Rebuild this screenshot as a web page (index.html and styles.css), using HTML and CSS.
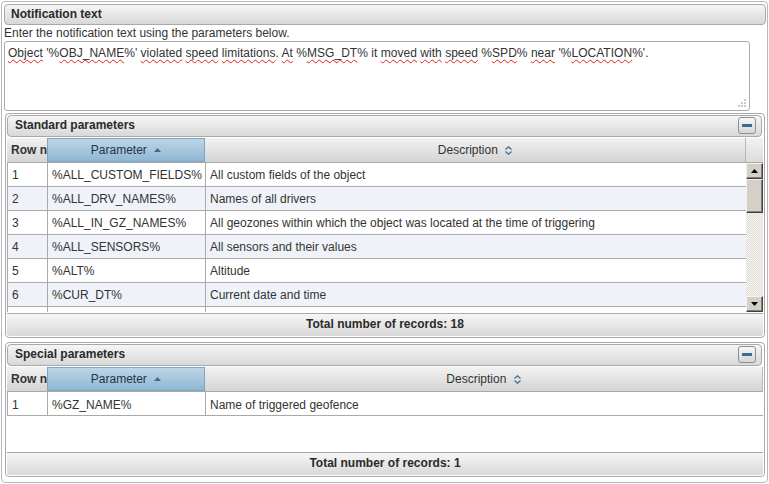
FILE: index.html
```html
<!DOCTYPE html>
<html lang="en">
<head>
  <meta charset="UTF-8">
  <title>Notification text</title>
  <link rel="stylesheet" href="styles.css">
</head>
<body>
  <div class="frame">
    <div class="bar title">Notification text</div>
    <div class="hint">Enter the notification text using the parameters below.</div>
    <div class="editor">
      <span class="sp">Object</span> '%<span class="sp">OBJ_NAME</span>%' <span class="sp">violated</span> <span class="sp">speed</span> <span class="sp">limitations</span>. <span class="sp">At</span> %<span class="sp">MSG_DT</span>% it <span class="sp">moved</span> <span class="sp">with</span> <span class="sp">speed</span> %<span class="sp">SPD</span>% <span class="sp">near</span> '%<span class="sp">LOCATION</span>%'.
      <svg class="grip" width="9" height="9" viewBox="0 0 9 9">
        <rect x="6" y="0" width="2" height="2" fill="#c8c8c8"/>
        <rect x="3" y="3" width="2" height="2" fill="#c8c8c8"/>
        <rect x="6" y="3" width="2" height="2" fill="#c8c8c8"/>
        <rect x="0" y="6" width="2" height="2" fill="#c8c8c8"/>
        <rect x="3" y="6" width="2" height="2" fill="#c8c8c8"/>
        <rect x="6" y="6" width="2" height="2" fill="#c8c8c8"/>
      </svg>
    </div>

    <!-- standard parameters -->
    <div class="panel">
      <div class="bar panel-head">
        Standard parameters
        <span class="toggle"><span class="minus"></span></span>
      </div>
      <div class="grid-head with-scroll">
        <div class="th th-num">Row number</div>
        <div class="th th-sel">Parameter <svg class="sort" width="7" height="4" viewBox="0 0 7 4"><path d="M0 4 L3.5 0 L7 4 Z" fill="#3e6c8c"/></svg></div>
        <div class="th">Description <svg class="sort2" width="7" height="9" viewBox="0 0 7 9"><path d="M0.5 3.5 L3.5 0.8 L6.5 3.5 M0.5 5.5 L3.5 8.2 L6.5 5.5" fill="none" stroke="#3e6c8c" stroke-width="1.2"/></svg></div>
        <div class="th th-blank"></div>
      </div>
      <div class="grid-body">
        <div class="rows">
          <table class="rows-table">
            <tr><td>1</td><td>%ALL_CUSTOM_FIELDS%</td><td>All custom fields of the object</td></tr>
            <tr class="alt"><td>2</td><td>%ALL_DRV_NAMES%</td><td>Names of all drivers</td></tr>
            <tr><td>3</td><td>%ALL_IN_GZ_NAMES%</td><td>All geozones within which the object was located at the time of triggering</td></tr>
            <tr class="alt"><td>4</td><td>%ALL_SENSORS%</td><td>All sensors and their values</td></tr>
            <tr><td>5</td><td>%ALT%</td><td>Altitude</td></tr>
            <tr class="alt"><td>6</td><td>%CUR_DT%</td><td>Current date and time</td></tr>
            <tr><td></td><td></td><td></td></tr>
          </table>
        </div>
        <div class="scrollbar">
          <div class="sb-btn"><svg width="7" height="4" viewBox="0 0 7 4"><path d="M0 4 L3.5 0 L7 4 Z" fill="#000"/></svg></div>
          <div class="sb-thumb"></div>
          <div class="sb-track"></div>
          <div class="sb-btn"><svg width="7" height="4" viewBox="0 0 7 4"><path d="M0 0 L3.5 4 L7 0 Z" fill="#000"/></svg></div>
        </div>
      </div>
      <div class="bar footer">Total number of records: 18</div>
    </div>

    <!-- special parameters -->
    <div class="panel panel-small">
      <div class="bar panel-head">
        Special parameters
        <span class="toggle"><span class="minus"></span></span>
      </div>
      <div class="grid-head">
        <div class="th th-num">Row number</div>
        <div class="th th-sel">Parameter <svg class="sort" width="7" height="4" viewBox="0 0 7 4"><path d="M0 4 L3.5 0 L7 4 Z" fill="#3e6c8c"/></svg></div>
        <div class="th">Description <svg class="sort2" width="7" height="9" viewBox="0 0 7 9"><path d="M0.5 3.5 L3.5 0.8 L6.5 3.5 M0.5 5.5 L3.5 8.2 L6.5 5.5" fill="none" stroke="#3e6c8c" stroke-width="1.2"/></svg></div>
      </div>
      <div class="grid-body small-body">
        <table class="rows-table">
          <tr><td>1</td><td>%GZ_NAME%</td><td>Name of triggered geofence</td></tr>
        </table>
      </div>
      <div class="bar footer">Total number of records: 1</div>
    </div>
  </div>
</body>
</html>
```

FILE: styles.css
```css
body {
  margin: 0;
  background: #fff;
  font-family: "Liberation Sans", Arial, sans-serif;
  font-size: 12px;
  color: #333;
}
.frame {
  margin: 1px 1px 0 1px;
  height: 479px;
  border: 1px solid #b8b8b8;
  border-radius: 4px;
  padding: 1px 1px 0 2px;
}
.bar {
  box-sizing: border-box;
  border: 1px solid #a9a9a9;
  border-radius: 4px;
  background: linear-gradient(#f6f6f6, #d8d8d8);
  font-weight: bold;
  color: #2a2a2a;
}
.title {
  margin-top: 1px;
  height: 21px;
  line-height: 18px;
  padding-left: 6px;
}
.hint {
  height: 16px;
  line-height: 16px;
}
.editor {
  position: relative;
  box-sizing: border-box;
  width: 746px;
  height: 70px;
  border: 1px solid #a9a9a9;
  border-radius: 3px;
  padding: 3px 3px 2px;
  line-height: 17px;
  letter-spacing: 0.03px;
  color: #333;
}
.sp {
  text-decoration: underline wavy #e0201a;
  text-decoration-thickness: 1px;
  text-underline-offset: 2px;
  text-decoration-skip-ink: none;
}
.grip {
  position: absolute;
  right: 2px;
  bottom: 2px;
}
.panel {
  margin: 2px 1px 0 1px;
  height: 225px;
  box-sizing: border-box;
  border: 1px solid #a9a9a9;
  border-radius: 4px;
  padding: 1px;
  display: flex;
  flex-direction: column;
}
.panel-small {
  margin-top: 4px;
  height: 135px;
}
.panel-head {
  position: relative;
  height: 22px;
  line-height: 19px;
  padding-left: 7px;
  margin-right: 1px;
}
.toggle {
  position: absolute;
  right: 5px;
  top: 1px;
  width: 16px;
  height: 15px;
  border: 1px solid #8e8e8e;
  border-radius: 3px;
  background: linear-gradient(#f8f8f8, #d6d6d6);
  display: flex;
  align-items: center;
  justify-content: center;
}
.minus {
  width: 10px;
  height: 3px;
  background: #3e6c8c;
}
.grid-head {
  margin-top: 1px;
  height: 25px;
  display: grid;
  grid-template-columns: 40px 158px 1fr;
  background: linear-gradient(#f2f2f2, #d4d4d4);
  border-bottom: 1px solid #a9a9a9;
  box-sizing: border-box;
}
.with-scroll {
  grid-template-columns: 40px 158px 541px 1fr;
}
.th {
  border-right: 1px solid #b8b8b8;
  text-align: center;
  line-height: 24px;
  white-space: nowrap;
  overflow: hidden;
  color: #333;
}
.th-num {
  text-align: left;
  padding-left: 4px;
  font-weight: bold;
  border-right: none;
}
.th-sel {
  background: linear-gradient(#bdd6e7, #8fb7d2);
  border: 1px solid #7ea6c3;
  line-height: 22px;
  color: #1f3447;
}
.th-blank {
  border-right: none;
  background: linear-gradient(#f2f2f2, #dcdcdc);
}
.sort {
  margin-left: 4px;
  vertical-align: 2px;
}
.sort2 {
  margin-left: 4px;
  vertical-align: -1px;
}
.grid-body {
  height: 150px;
  display: flex;
  overflow: hidden;
}
.small-body {
  height: 59px;
  display: block;
}
.rows {
  width: 739px;
  overflow: hidden;
}
.rows-table {
  width: 100%;
  border-collapse: collapse;
  table-layout: fixed;
}
.rows-table td {
  height: 21px;
  padding: 2px 0 0 4px;
  border-bottom: 1px solid #a9a9a9;
  border-left: 1px solid #a9a9a9;
  white-space: nowrap;
  overflow: hidden;
  color: #333;
}
.rows-table td:first-child {
  width: 35px;
}
.rows-table td:nth-child(2) {
  width: 153px;
}
.rows-table tr.alt td {
  background: #eff3f9;
}
.scrollbar {
  width: 17px;
  display: flex;
  flex-direction: column;
}
.sb-btn,
.sb-thumb {
  box-sizing: border-box;
  background: #d4d0c8;
  border: 1px solid;
  border-color: #f4f3ef #404040 #404040 #f4f3ef;
  box-shadow: inset -1px -1px 0 #808080;
}
.sb-btn {
  height: 16px;
  display: flex;
  align-items: center;
  justify-content: center;
}
.sb-thumb {
  height: 34px;
}
.sb-track {
  flex: 1;
  background: repeating-conic-gradient(#e2dfd8 0 25%, #f4f3ef 0 50%) 0 0 / 2px 2px;
}
.footer {
  height: 23px;
  line-height: 21px;
  text-align: center;
  border-radius: 0 0 3px 3px;
  border-left: none;
  border-right: none;
  border-bottom: none;
  margin-top: 1px;
}
```
